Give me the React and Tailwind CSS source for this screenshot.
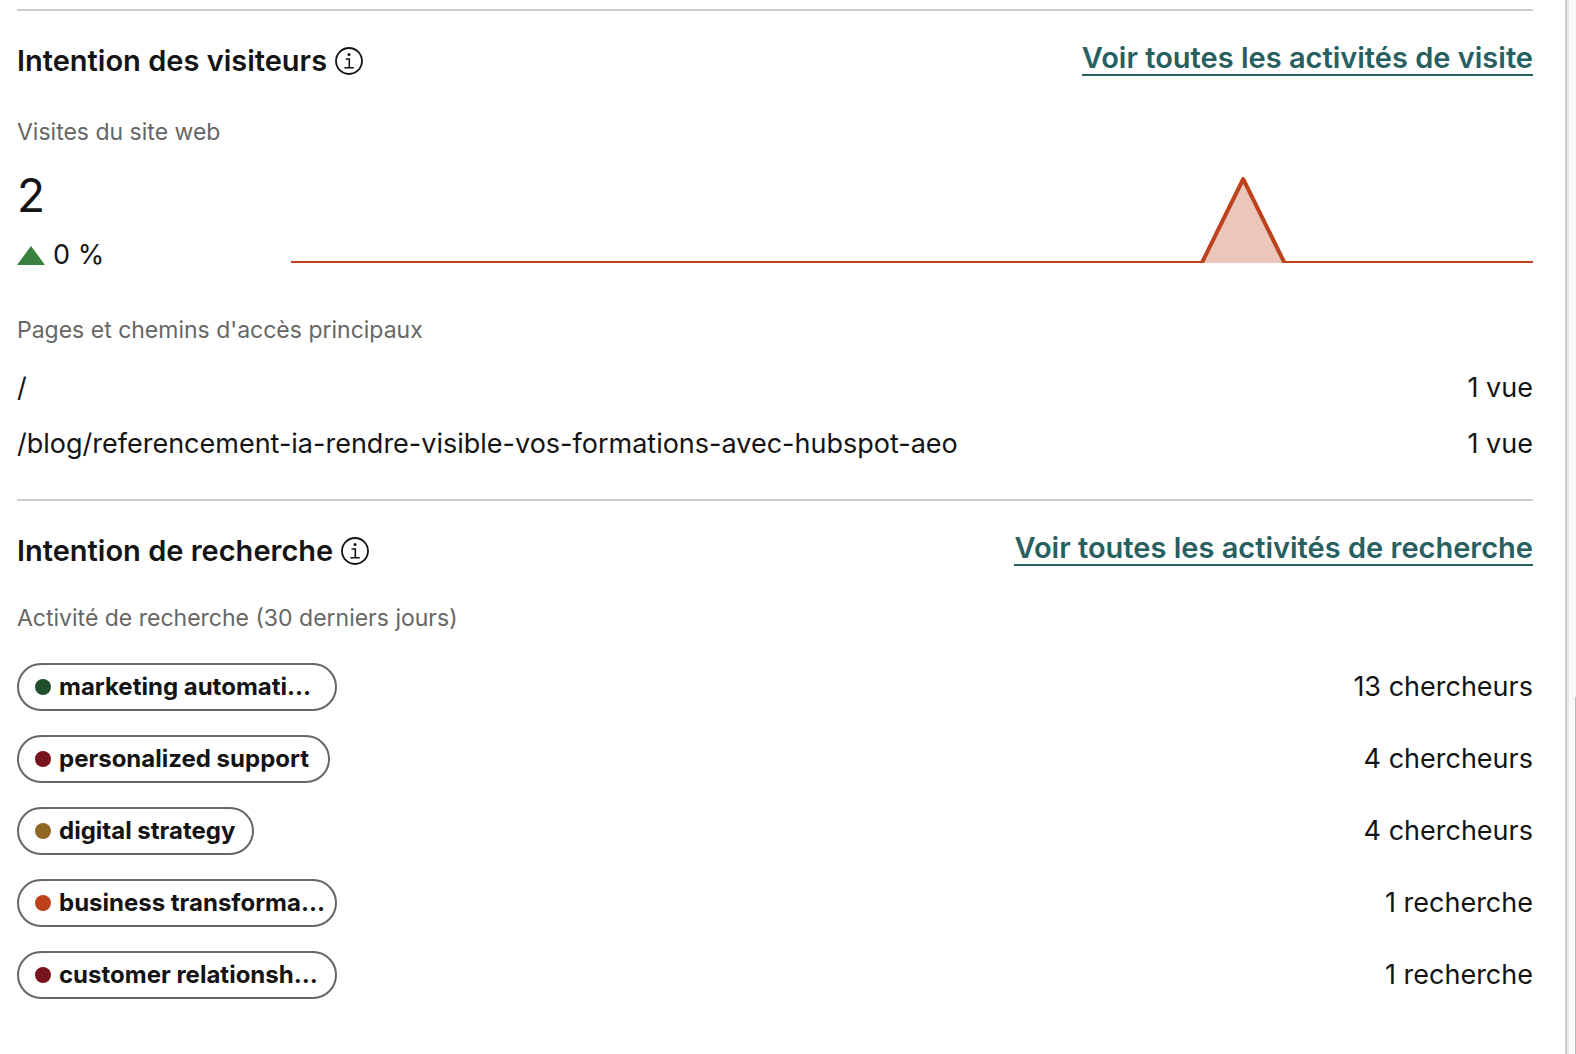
import React from "react";

const PAGES = [
  { path: "/", views: "1 vue" },
  { path: "/blog/referencement-ia-rendre-visible-vos-formations-avec-hubspot-aeo", views: "1 vue" },
];

const TOPICS = [
  { label: "marketing automati…", dot: "bg-[#1f4f2b]", width: "w-80", count: "13 chercheurs" },
  { label: "personalized support", dot: "bg-[#77131c]", width: "w-[313px]", count: "4 chercheurs" },
  { label: "digital strategy", dot: "bg-[#8f6625]", width: "w-[237px]", count: "4 chercheurs" },
  { label: "business transforma…", dot: "bg-[#bd411c]", width: "w-80", count: "1 recherche" },
  { label: "customer relationsh…", dot: "bg-[#77131c]", width: "w-80", count: "1 recherche" },
];

function InfoIcon() {
  return (
    <svg viewBox="0 0 28 28" className="block size-7" fill="none" stroke="#141414" strokeWidth="1.8" aria-hidden="true">
      <circle cx="14" cy="14" r="13" />
      <path d="M10.6 12H14.3V20.6M9.4 20.8H18.8" strokeWidth="1.6" />
      <circle cx="14" cy="7.4" r="1.5" fill="#141414" stroke="none" />
    </svg>
  );
}

function SectionHeader({ title, link }) {
  return (
    <header className="flex items-start justify-between pt-[31px]">
      <div className="flex items-center gap-2">
        <h2 className="text-[29px] leading-[38px] font-semibold">{title}</h2>
        <button type="button" aria-label={`Informations : ${title}`}>
          <InfoIcon />
        </button>
      </div>
      <a href="#" className="border-b-2 border-[#285f61] text-[29px] leading-8 font-semibold text-[#285f61]">
        {link}
      </a>
    </header>
  );
}

function VisitsChart() {
  return (
    <svg viewBox="0 0 30 88" preserveAspectRatio="none" className="mb-2 block h-[88px] min-w-0 flex-1 overflow-hidden" role="img" aria-label="Visites du site web">
      <path d="M22 88L23 4L24 88Z" fill="#ebc6bb" />
      <path d="M0 88H22L23 4L24 88H30" fill="none" stroke="#bd411c" strokeWidth="4" strokeLinejoin="round" vectorEffect="non-scaling-stroke" />
    </svg>
  );
}

export default function App() {
  return (
    <div className="flex min-h-screen bg-[#fafafa] font-['Inter',sans-serif] text-[#141414]">
      <main className="min-w-0 flex-1 border-r-2 border-[#cccccc] bg-white pt-[9px] pr-8 pb-12 pl-[17px]">
        <section className="border-t-2 border-[#cccccc]">
          <SectionHeader title="Intention des visiteurs" link="Voir toutes les activités de visite" />
          <h3 className="mt-9 text-[23px] leading-8 text-[#666666]">Visites du site web</h3>
          <div className="mt-[19px] flex items-end">
            <div className="w-[274px]">
              <p className="text-[46px] leading-[56px]">2</p>
              <p className="mt-4 flex items-center gap-2 text-[27px] leading-8">
                <svg viewBox="0 0 28 19" className="h-[19px] w-7" aria-hidden="true">
                  <path d="M14 0L28 19H0Z" fill="#38813f" />
                </svg>
                0 %
              </p>
            </div>
            <VisitsChart />
          </div>
          <h3 className="mt-[43px] text-[23px] leading-8 text-[#666666]">Pages et chemins d'accès principaux</h3>
          <ul className="mt-6 flex flex-col gap-5">
            {PAGES.map((page) => (
              <li key={page.path} className="flex justify-between text-[27px] leading-9">
                <span>{page.path}</span>
                <span>{page.views}</span>
              </li>
            ))}
          </ul>
        </section>

        <section className="mt-[37px] border-t-2 border-[#cccccc]">
          <SectionHeader title="Intention de recherche" link="Voir toutes les activités de recherche" />
          <h3 className="mt-8 text-[23px] leading-8 text-[#666666]">Activité de recherche (30 derniers jours)</h3>
          <ul className="mt-[29px] flex flex-col gap-6">
            {TOPICS.map((topic) => (
              <li key={topic.label} className="flex items-center justify-between">
                <span className={`flex h-12 items-center gap-2 rounded-full border-2 border-[#666666] pl-4 text-2xl font-bold whitespace-nowrap ${topic.width}`}>
                  <span className={`size-4 rounded-full ${topic.dot}`} />
                  {topic.label}
                </span>
                <span className="text-[27px] leading-9">{topic.count}</span>
              </li>
            ))}
          </ul>
        </section>
      </main>
      <div className="flex w-[9px] justify-end border-l-2 border-[#e6e6e6]">
        <div className="mt-[697px] w-px bg-[#b8b8b8]" />
      </div>
    </div>
  );
}
